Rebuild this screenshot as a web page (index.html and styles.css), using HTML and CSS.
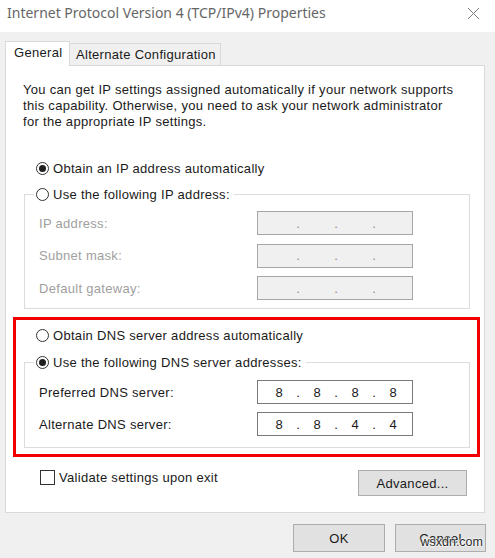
FILE: index.html
```html
<!DOCTYPE html>
<html>
<head>
<meta charset="utf-8">
<title>Internet Protocol Version 4 (TCP/IPv4) Properties</title>
<link rel="stylesheet" href="styles.css">
</head>
<body>
<div class="window">
  <header class="titlebar">
    <span class="title">Internet Protocol Version 4 (TCP/IPv4) Properties</span>
    <svg class="close" width="13" height="13" viewBox="0 0 13 13" aria-label="Close"><path d="M1 1L12 12M12 1L1 12" stroke="#7a7a7a" stroke-width="1" fill="none"/></svg>
  </header>
  <div class="body">
    <div class="tabs">
      <div class="tab active">General</div>
      <div class="tab">Alternate Configuration</div>
    </div>
    <div class="panel">
      <p class="intro">You can get IP settings assigned automatically if your network supports<br>this capability. Otherwise, you need to ask your network administrator<br>for the appropriate IP settings.</p>

      <div class="radio-row first"><span class="radio checked"></span><span>Obtain an IP address automatically</span></div>

      <fieldset class="group ip-group disabled">
        <legend><span class="radio"></span><span>Use the following IP address:</span></legend>
        <div class="fields">
          <span class="label">IP address:</span>
          <div class="ip"><span class="seg"></span><span class="dot">.</span><span class="seg"></span><span class="dot">.</span><span class="seg"></span><span class="dot">.</span><span class="seg"></span></div>
          <span class="label">Subnet mask:</span>
          <div class="ip"><span class="seg"></span><span class="dot">.</span><span class="seg"></span><span class="dot">.</span><span class="seg"></span><span class="dot">.</span><span class="seg"></span></div>
          <span class="label">Default gateway:</span>
          <div class="ip"><span class="seg"></span><span class="dot">.</span><span class="seg"></span><span class="dot">.</span><span class="seg"></span><span class="dot">.</span><span class="seg"></span></div>
        </div>
      </fieldset>

      <div class="highlight">
        <div class="radio-row"><span class="radio"></span><span>Obtain DNS server address automatically</span></div>
        <fieldset class="group dns-group">
          <legend><span class="radio checked"></span><span>Use the following DNS server addresses:</span></legend>
          <div class="fields">
            <span class="label">Preferred DNS server:</span>
            <div class="ip"><span class="seg">8</span><span class="dot">.</span><span class="seg">8</span><span class="dot">.</span><span class="seg">8</span><span class="dot">.</span><span class="seg">8</span></div>
            <span class="label">Alternate DNS server:</span>
            <div class="ip"><span class="seg">8</span><span class="dot">.</span><span class="seg">8</span><span class="dot">.</span><span class="seg">4</span><span class="dot">.</span><span class="seg">4</span></div>
          </div>
        </fieldset>
      </div>

      <div class="footer-row">
        <div class="check"><span class="box"></span><span>Validate settings upon exit</span></div>
        <button class="btn advanced">Advanced...</button>
      </div>
    </div>
    <div class="buttons">
      <button class="btn ok">OK</button>
      <button class="btn cancel">Cancel</button>
    </div>
  </div>
  <div class="watermark">wsxdn.com</div>
</div>
</body>
</html>
```

FILE: styles.css
```css
* { box-sizing: border-box; }

html, body {
  margin: 0;
  padding: 0;
}

body {
  width: 495px;
  height: 558px;
  overflow: hidden;
  background: #f0f0f0;
  font-family: "Liberation Sans", Arial, sans-serif;
  font-size: 13px;
  letter-spacing: 0.3px;
  color: #1a1a1a;
}

.window {
  position: relative;
  width: 495px;
  height: 558px;
  background: #f0f0f0;
}

.titlebar {
  height: 32px;
  background: #ffffff;
  display: flex;
  align-items: flex-start;
  justify-content: space-between;
  padding: 3px 15px 0 7px;
}

.title {
  font-family: "Noto Sans", "Open Sans", sans-serif;
  font-size: 14px;
  line-height: 20px;
  letter-spacing: 0;
  color: #666666;
}

.close {
  margin-top: 4px;
}

.body {
  padding: 9px 10px 0 5px;
}

.tabs {
  display: flex;
  align-items: flex-end;
  height: 24px;
}

.tab {
  height: 22px;
  padding: 0 6px;
  border: 1px solid #d9d9d9;
  border-bottom: none;
  background: #f0f0f0;
  line-height: 21px;
  white-space: nowrap;
}

.tab.active {
  position: relative;
  z-index: 1;
  height: 25px;
  margin-bottom: -1px;
  width: 65px;
  padding: 0 0 0 8px;
  background: #ffffff;
  line-height: 22px;
}

.tab + .tab {
  margin-left: -1px;
  width: 152px;
}

.panel {
  background: #ffffff;
  border: 1px solid #d9d9d9;
  width: 480px;
  padding: 16px 14px 16px 17px;
}

.intro {
  margin: 0;
  line-height: 16px;
}

.radio-row {
  display: flex;
  align-items: center;
  height: 16px;
  padding-left: 13px;
}

.radio-row.first {
  margin-top: 30px;
}

.radio {
  flex: none;
  width: 13px;
  height: 13px;
  border: 1px solid #333333;
  border-radius: 50%;
  margin-right: 4px;
  display: inline-flex;
  align-items: center;
  justify-content: center;
  background: #ffffff;
}

.radio.checked::after {
  content: "";
  width: 7px;
  height: 7px;
  border-radius: 50%;
  background: #1f1f1f;
}

.group {
  margin: 0 0 0 1px;
  padding: 0;
  border: 1px solid #dcdcdc;
  min-width: 0;
}

.group legend {
  display: flex;
  align-items: center;
  height: 16px;
  margin-left: 9px;
  padding: 0 4px 0 2px;
}

.ip-group {
  margin-top: 10px;
}

.fields {
  display: grid;
  grid-template-columns: 218px 156px;
  align-items: center;
}

.ip-group .fields {
  row-gap: 8.5px;
  padding: 9px 0 8px 14px;
}

.dns-group {
  margin-top: 11px;
}

.dns-group .fields {
  row-gap: 8px;
  padding: 10px 0 11px 14px;
}

.label {
  white-space: nowrap;
}

.disabled .label {
  color: #a0a0a0;
}

.ip {
  height: 24px;
  border: 1px solid #7a7a7a;
  background: #ffffff;
  display: flex;
  align-items: center;
  padding-left: 4.5px;
  color: #1a1a1a;
  letter-spacing: 0;
}

.disabled .ip {
  border-color: #a6a6a6;
  background: #f0f0f0;
  color: #8a8a8a;
}

.seg {
  width: 33px;
  text-align: center;
}

.dot {
  width: 5px;
  text-align: center;
}

.highlight {
  margin: 8px -10px 0 -10px;
  border: 3px solid #f20000;
  padding: 7px 7px 6px 7px;
}

.footer-row {
  display: flex;
  justify-content: space-between;
  align-items: flex-start;
  margin-top: 13px;
  padding: 0 3px 0 17px;
}

.check {
  display: flex;
  align-items: center;
  height: 15px;
}

.box {
  width: 15px;
  height: 15px;
  border: 1px solid #333333;
  background: #ffffff;
  margin-right: 4px;
}

.btn {
  font-family: "Liberation Sans", Arial, sans-serif;
  font-size: 13px;
  letter-spacing: 0.3px;
  color: #1a1a1a;
  background: #e1e1e1;
  border: 1px solid #adadad;
  border-radius: 0;
  padding: 0;
  margin: 0;
}

.advanced {
  width: 109px;
  height: 26px;
}

.buttons {
  display: flex;
  justify-content: flex-end;
  gap: 10px;
  margin-top: 11px;
  margin-right: -1px;
}

.ok {
  width: 92px;
  height: 28px;
}

.cancel {
  width: 91px;
  height: 28px;
}

.watermark {
  position: absolute;
  right: 12px;
  bottom: 9px;
  font-family: "Liberation Sans", sans-serif;
  font-size: 12.5px;
  line-height: 14px;
  letter-spacing: 0;
  color: #2a2a2a;
  text-shadow: 0 0 2px #ffffff, 0 0 2px #ffffff, 0 0 2px #ffffff;
}
```
